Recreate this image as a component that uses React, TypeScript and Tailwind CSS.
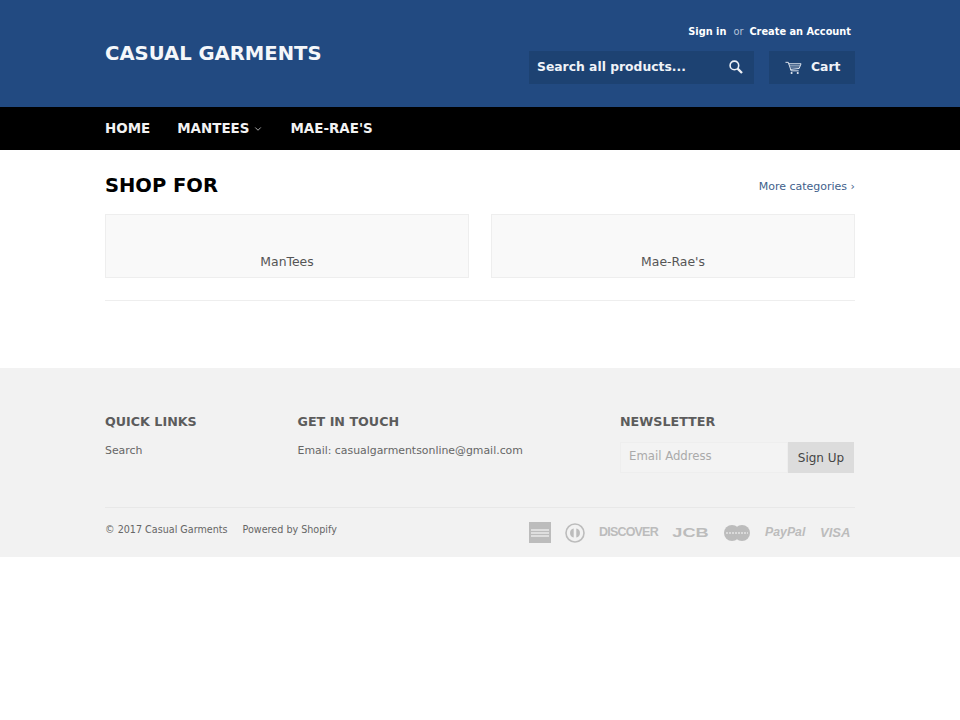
import { ChevronDown } from 'lucide-react'

const QUICK_LINKS = ['Search']

function CartIcon() {
  return (
    <svg viewBox="0 0 18 14" className="w-[17px] h-[14px]" fill="none" stroke="#e8edf4" strokeWidth="1">
      <path d="M0.5 1H3.5L6.5 10H14.5" />
      <path d="M3.8 2.5H17L15 7.5L5.5 8.5" />
      <path d="M5 4.5H16M5.5 6H15.5" strokeWidth="0.6" />
      <circle cx="7" cy="12.3" r="1.1" fill="#e8edf4" stroke="none" />
      <circle cx="13.5" cy="12.3" r="1.1" fill="#e8edf4" stroke="none" />
    </svg>
  )
}

function SearchIcon() {
  return (
    <svg viewBox="0 0 14 14" className="w-[14px] h-[14px] mb-[2px]" fill="none" stroke="#eef1f6">
      <circle cx="5.4" cy="5.4" r="4.3" strokeWidth="1.6" />
      <path d="M8.6 8.6L13 13" strokeWidth="2.3" />
    </svg>
  )
}

function PaymentIcons() {
  return (
    <div className="flex items-center text-[#bcbcbc] font-['Liberation_Sans',sans-serif]">
      <div className="w-[22px] h-[21px] bg-[#bcbcbc] flex flex-col items-center justify-center gap-px mr-[14px]">
        <span className="block w-[18px] h-[2px] bg-[#dedede]" />
        <span className="block w-[18px] h-[2px] bg-[#dedede]" />
        <span className="block w-[18px] h-[2px] bg-[#dedede]" />
      </div>
      <svg viewBox="0 0 20 20" className="w-[20px] h-[20px] mr-[14px]">
        <circle cx="10" cy="10" r="9" fill="none" stroke="#bcbcbc" strokeWidth="1.6" />
        <path d="M8.7 5.5a4.6 4.6 0 0 0 0 9zM11.3 5.5a4.6 4.6 0 0 1 0 9z" fill="#bcbcbc" />
      </svg>
      <span className="w-[59px] text-[12.5px] leading-none font-bold tracking-[-0.8px] whitespace-nowrap mr-[14px]">DISCOVER</span>
      <span className="w-[37px] text-center text-[13px] leading-none font-bold scale-x-[1.4] mr-[15px]">JCB</span>
      <svg viewBox="0 0 26 16" className="w-[26px] h-[16px] mr-[15px]">
        <circle cx="8" cy="8" r="8" fill="#bcbcbc" />
        <circle cx="18" cy="8" r="8" fill="#bcbcbc" />
        <path d="M2 8H24" stroke="#e4e4e4" strokeWidth="1.5" strokeDasharray="2 1" />
      </svg>
      <span className="w-[40px] text-[12.3px] leading-none font-bold italic whitespace-nowrap mr-[15px]">PayPal</span>
      <span className="w-[30px] text-[13px] leading-none font-bold italic">VISA</span>
    </div>
  )
}

export default function App() {
  return (
    <div className="min-h-[720px] bg-white font-['DejaVu_Sans',sans-serif] text-[#555]">
      <header className="bg-[#224a81] h-[107px]">
        <div className="w-[750px] mx-auto flex justify-between">
          <div className="pt-[41px] text-[19.6px] leading-[26px] font-bold text-[#f5f7fa]">
            CASUAL GARMENTS
          </div>
          <div className="flex flex-col items-end pt-[25px]">
            <div className="flex gap-[6px] text-[9.8px] leading-[14px] pr-[4px] text-[#dfe6f0]">
              <span className="font-semibold text-white mr-px">Sign in</span>
              <span className="text-[#b5c4da]">or</span>
              <span className="font-semibold text-white">Create an Account</span>
            </div>
            <div className="flex gap-[15px] mt-[12px]">
              <div className="w-[225px] h-[33px] bg-[#1d4272] flex items-center justify-between pl-[8px] pr-[11px]">
                <span className="text-[12.35px] leading-[16px] mb-[2px] font-bold text-[#f0f3f8]">Search all products...</span>
                <SearchIcon />
              </div>
              <div className="w-[86px] h-[33px] bg-[#1d4272] flex items-center pl-[16px] gap-[9px]">
                <CartIcon />
                <span className="text-[12.4px] leading-[16px] mb-[2px] font-bold text-[#f0f3f8]">Cart</span>
              </div>
            </div>
          </div>
        </div>
      </header>

      <nav className="bg-black h-[43px]">
        <div className="w-[750px] mx-auto flex items-center h-full pt-px text-[13.45px] font-bold text-[#f2f2f2]">
          <span>HOME</span>
          <span className="ml-[27px]">MANTEES</span>
          <ChevronDown size={10} strokeWidth={2} className="ml-[4px] text-[#ccc]" />
          <span className="ml-[27px]">MAE-RAE'S</span>
        </div>
      </nav>

      <main className="w-[750px] mx-auto">
        <div className="flex justify-between items-center pt-[22px]">
          <h2 className="text-[19.5px] leading-[27px] font-bold text-black">SHOP FOR</h2>
          <span className="text-[11px] mt-[3px] text-[#3f5f8c]">More categories ›</span>
        </div>
        <div className="grid grid-cols-2 gap-[22px] mt-[15px]">
          <div className="h-[64px] bg-[#f9f9f9] border border-[#eeeeee] flex items-end justify-center pb-[7px] text-[12.4px] leading-[16px] font-medium">
            ManTees
          </div>
          <div className="h-[64px] bg-[#f9f9f9] border border-[#eeeeee] flex items-end justify-center pb-[7px] text-[12.4px] leading-[16px] font-medium">
            Mae-Rae's
          </div>
        </div>
        <div className="h-px bg-[#eeeeee] mt-[22px]" />
      </main>

      <footer className="bg-[#f2f2f2] h-[189px] mt-[67px]">
        <div className="w-[750px] mx-auto pt-[45px]">
          <div className="flex h-[94px]">
            <div className="w-[192.5px]">
              <h4 className="text-[12.7px] leading-[18px] font-bold text-[#5c5c5c]">QUICK LINKS</h4>
              {QUICK_LINKS.map((l) => (
                <p key={l} className="text-[10.9px] leading-[16px] mt-[12px] text-[#666]">{l}</p>
              ))}
            </div>
            <div className="w-[322.5px]">
              <h4 className="text-[12.7px] leading-[18px] font-bold text-[#5c5c5c]">GET IN TOUCH</h4>
              <p className="text-[10.9px] leading-[16px] mt-[12px] text-[#666]">Email: casualgarmentsonline@gmail.com</p>
            </div>
            <div className="flex-1">
              <h4 className="text-[12.7px] leading-[18px] font-bold text-[#5c5c5c]">NEWSLETTER</h4>
              <div className="flex mt-[11px] h-[31px] w-[234px]">
                <div className="flex-1 bg-[#f3f3f3] border border-[#eeeeee] flex items-center pl-[8px] pb-[2px] text-[11.7px] text-[#aaaaaa]">
                  Email Address
                </div>
                <div className="w-[66px] bg-[#dcdcdc] flex items-center justify-center text-[12px] text-[#444]">
                  Sign Up
                </div>
              </div>
            </div>
          </div>
          <div className="h-px bg-[#e8e8e8]" />
          <div className="flex justify-between items-center h-[49px]">
            <div className="flex gap-[15px] text-[9.6px] mb-[5px] text-[#666]">
              <span>© 2017 Casual Garments</span>
              <span>Powered by Shopify</span>
            </div>
            <div className="pr-[5px]"><PaymentIcons /></div>
          </div>
        </div>
      </footer>
    </div>
  )
}
